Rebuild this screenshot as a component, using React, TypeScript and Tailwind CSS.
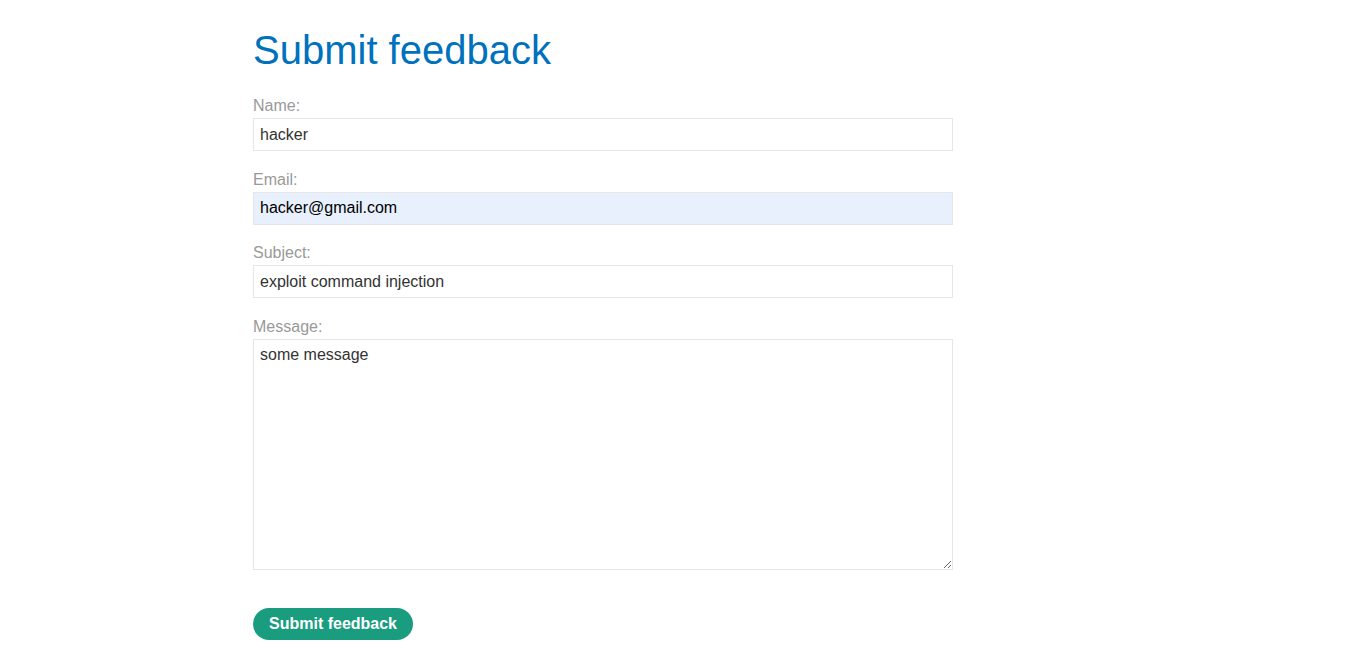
export default function App() {
  const fields = [
    { label: 'Name:', value: 'hacker', autofill: false },
    { label: 'Email:', value: 'hacker@gmail.com', autofill: true },
    { label: 'Subject:', value: 'exploit command injection', autofill: false },
  ];

  return (
    <div className="min-h-[655px] bg-white font-['Liberation_Sans',Arial,sans-serif] text-[#333]">
      <div className="ml-[253px] w-[700px] pt-[26px]">
        <h1 className="text-[40px] leading-[48px] text-[#0071bc]">Submit feedback</h1>

        <form className="flex flex-col" onSubmit={(e) => e.preventDefault()}>
          {fields.map((f, i) => (
            <div key={f.label} className={i === 0 ? 'mt-[22px]' : 'mt-[18.5px]'}>
              <label className="block text-[16px] leading-[20px] text-[#999]">{f.label}</label>
              <input
                defaultValue={f.value}
                className={`mt-[2px] block h-[33px] w-full border border-[#e6e6e6] px-[6px] text-[16px] outline-none ${
                  f.autofill ? 'bg-[#e8f0fe] text-black' : 'bg-white text-[#333]'
                }`}
              />
            </div>
          ))}

          <div className="mt-[18.5px]">
            <label className="block text-[16px] leading-[20px] text-[#999]">Message:</label>
            <textarea
              defaultValue="some message"
              className="mt-[2px] block h-[231px] w-full border border-[#e6e6e6] px-[6px] py-[5px] text-[16px] leading-[20px] text-[#333] outline-none"
            />
          </div>

          <div className="mt-[38px]">
            <button
              type="submit"
              className="h-[32px] w-[160px] rounded-full bg-[#1a9c7f] text-[16px] font-bold text-white"
            >
              Submit feedback
            </button>
          </div>
        </form>
      </div>
    </div>
  );
}
